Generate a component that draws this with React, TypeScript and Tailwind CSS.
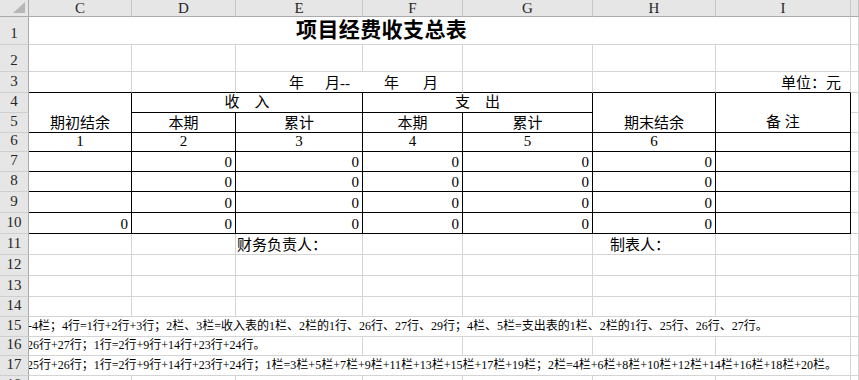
import React from "react";

const FONT = "font-['Liberation_Serif','Noto_Sans_CJK_SC',serif]";
const G = "border-r border-b border-r-[#d4d4d4] border-b-[#d4d4d4]";
const B = "border-r border-b border-r-black border-b-black";
const GB = "border-r border-b border-r-[#d4d4d4] border-b-black";
const HDR =
  "bg-[#e6e6e6] border-r border-b border-r-[#c6c6c6] border-b-[#ababab] flex items-center justify-center text-[#262626] text-[15px] leading-[17px]";
const RH =
  "bg-[#e6e6e6] border-r border-b border-r-[#ababab] border-b-[#cfcfcf] flex items-end justify-center text-[#262626] text-[15px] leading-[17px] pb-[2px] overflow-hidden";
const TXT = "flex items-end overflow-hidden whitespace-nowrap text-[15px] leading-[17px] text-black";
const CEN = "justify-center";
const RIGHT = "justify-end pr-[3px]";

function Rh({ n }: { n: number }) {
  return <div className={RH}>{n}</div>;
}

export default function App() {
  const cols = ["C", "D", "E", "F", "G", "H", "I"];
  const dataRows = [
    { n: 7, c: "" },
    { n: 8, c: "" },
    { n: 9, c: "" },
    { n: 10, c: "0" },
  ];
  return (
    <div className={`w-[859px] h-[380px] overflow-hidden bg-white ${FONT}`}>
      <div className="grid grid-cols-[29px_103px_104px_127px_100px_130px_123px_135px_1fr] grid-rows-[17px_28px_27px_21px_20px_20px_19px_20px_20px_21px_21px_21px_21px_21px_20px_20px_19px_20px_20px]">
        {/* header row */}
        <div className="bg-[#e6e6e6] border-r border-b border-r-[#ababab] border-b-[#ababab] relative">
          <svg className="absolute left-[13px] top-[2px]" width="12" height="11" viewBox="0 0 12 11">
            <polygon points="12,0 12,11 0,11" fill="#b7b7b7" />
          </svg>
        </div>
        {cols.map((c) => (
          <div key={c} className={HDR}>
            {c}
          </div>
        ))}
        <div className={HDR}></div>

        {/* row 1 */}
        <Rh n={1} />
        <div className={`col-span-7 ${G} ${TXT} pl-[267px] pb-[2px]`}>
          <span className="text-[21px] leading-[24px] font-bold tracking-[0.4px]">项目经费收支总表</span>
        </div>
        <div className={G}></div>

        {/* row 2 */}
        <Rh n={2} />
        {cols.map((c) => (
          <div key={c} className={G}></div>
        ))}
        <div className={G}></div>

        {/* row 3 */}
        <Rh n={3} />
        <div className={GB}></div>
        <div className={GB}></div>
        <div className={`col-span-2 ${GB} ${TXT} pl-[53px]`}>
          <span>年</span>
          <span className="ml-[21px]">月--</span>
          <span className="ml-[34px]">年</span>
          <span className="ml-[24px]">月</span>
        </div>
        <div className={GB}></div>
        <div className={GB}></div>
        <div className={`${GB} ${TXT} justify-end pr-[9px]`}>单位：元</div>
        <div className={G}></div>

        {/* row 4 */}
        <Rh n={4} />
        <div className={`row-span-2 ${B} ${TXT} ${CEN}`}>期初结余</div>
        <div className={`col-span-2 ${B} ${TXT} ${CEN} pb-[1px]`}>收　入</div>
        <div className={`col-span-2 ${B} ${TXT} ${CEN} pb-[1px]`}>支　出</div>
        <div className={`row-span-2 ${B} ${TXT} ${CEN}`}>期末结余</div>
        <div className={`row-span-2 ${B} ${TXT} ${CEN} pb-[1px]`}>备 注</div>
        <div className={G}></div>

        {/* row 5 */}
        <Rh n={5} />
        <div className={`${B} ${TXT} ${CEN}`}>本期</div>
        <div className={`${B} ${TXT} ${CEN}`}>累计</div>
        <div className={`${B} ${TXT} ${CEN}`}>本期</div>
        <div className={`${B} ${TXT} ${CEN}`}>累计</div>
        <div className={G}></div>

        {/* row 6 */}
        <Rh n={6} />
        {["1", "2", "3", "4", "5", "6"].map((v) => (
          <div key={v} className={`${B} ${TXT} ${CEN} pb-[1px]`}>
            {v}
          </div>
        ))}
        <div className={B}></div>
        <div className={G}></div>

        {/* rows 7-10 */}
        {dataRows.map((r) => (
          <React.Fragment key={r.n}>
            <Rh n={r.n} />
            <div className={`${B} ${TXT} ${RIGHT}`}>{r.c}</div>
            <div className={`${B} ${TXT} ${RIGHT}`}>0</div>
            <div className={`${B} ${TXT} ${RIGHT}`}>0</div>
            <div className={`${B} ${TXT} ${RIGHT}`}>0</div>
            <div className={`${B} ${TXT} ${RIGHT}`}>0</div>
            <div className={`${B} ${TXT} ${RIGHT}`}>0</div>
            <div className={B}></div>
            <div className={G}></div>
          </React.Fragment>
        ))}

        {/* row 11 */}
        <Rh n={11} />
        <div className={G}></div>
        <div className={G}></div>
        <div className={`${G} ${TXT} pl-[1px]`}>财务负责人：</div>
        <div className={G}></div>
        <div className={G}></div>
        <div className={`${G} ${TXT} pl-[17px]`}>制表人：</div>
        <div className={G}></div>
        <div className={G}></div>

        {/* rows 12-14 */}
        {[12, 13, 14].map((n) => (
          <React.Fragment key={n}>
            <Rh n={n} />
            {cols.map((c) => (
              <div key={c} className={G}></div>
            ))}
            <div className={G}></div>
          </React.Fragment>
        ))}

        {/* row 15 */}
        <Rh n={15} />
        <div className={`col-span-7 ${G} flex items-end overflow-hidden whitespace-nowrap text-[12px] leading-[15px] pb-[2px]`}>
          <span className="ml-[-1px]">-4栏；4行=1行+2行+3行；2栏、3栏=收入表的1栏、2栏的1行、26行、27行、29行；4栏、5栏=支出表的1栏、2栏的1行、25行、26行、27行。</span>
        </div>
        <div className={G}></div>

        {/* row 16 */}
        <Rh n={16} />
        <div className={`col-span-3 ${G} flex items-end overflow-hidden whitespace-nowrap text-[12px] leading-[15px] pb-[2px]`}>
          <span className="ml-[-2px]">26行+27行；1行=2行+9行+14行+23行+24行。</span>
        </div>
        <div className={G}></div>
        <div className={G}></div>
        <div className={G}></div>
        <div className={G}></div>
        <div className={G}></div>

        {/* row 17 */}
        <Rh n={17} />
        <div className={`col-span-7 ${G} flex items-end overflow-hidden whitespace-nowrap text-[12px] leading-[15px] pb-[2px]`}>
          <span className="ml-[-2px]">25行+26行；1行=2行+9行+14行+23行+24行；1栏=3栏+5栏+7栏+9栏+11栏+13栏+15栏+17栏+19栏；2栏=4栏+6栏+8栏+10栏+12栏+14栏+16栏+18栏+20栏。</span>
        </div>
        <div className={G}></div>

        {/* row 18 */}
        <Rh n={18} />
        {cols.map((c) => (
          <div key={c} className={G}></div>
        ))}
        <div className={G}></div>
      </div>
    </div>
  );
}
